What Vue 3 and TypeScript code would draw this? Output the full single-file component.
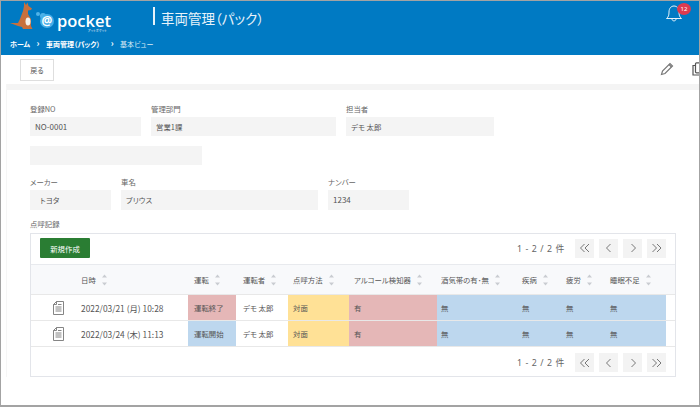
<template>
  <div class="page">
    <header class="app-header">
      <div class="brand-row">
        <div class="logo">
          <svg class="kangaroo" width="26" height="29" viewBox="0 0 26 29">
            <path d="M14 0 L16 3 L17.5 0.5 L18.5 4 L22 6.5 L21 8 L18 8.5 L18 12 L21 17 L21 24 L22.5 27 L13 27 L12 25 L8 24 L0 21 L8 21 L10 17 L13 9 L14 4 Z" fill="#c8703c" />
            <ellipse cx="18" cy="19.5" rx="2.5" ry="4" fill="#f4efe8" />
          </svg>
          <span class="bubble bubble-sm"></span>
          <span class="bubble bubble-md"></span>
          <span class="at">@</span>
          <span class="wordmark">pocket<small>アットポケット</small></span>
        </div>
        <h1 class="app-title">車両管理（パック）</h1>
        <button class="bell" aria-label="通知">
          <svg width="18" height="20" viewBox="0 0 18 20" fill="none" stroke="#e8f3fa" stroke-width="1">
            <path d="M1.5 15.5 C3.5 14 4 12 4 9 C4 5.5 6 3 9 3 C12 3 14 5.5 14 9 C14 12 14.5 14 16.5 15.5 Z" />
            <path d="M7 16 C7 18.5 11 18.5 11 16" />
          </svg>
          <span class="badge">12</span>
        </button>
      </div>
      <nav class="crumbs">
        <a>ホーム</a>
        <i>›</i>
        <a>車両管理（パック）</a>
        <i class="wide">›</i>
        <span>基本ビュー</span>
      </nav>
    </header>

    <div class="toolbar">
      <button class="back-btn">戻る</button>
      <div class="tool-icons">
        <svg width="14" height="14" viewBox="0 0 14 14" fill="none" stroke="#777" stroke-width="1.2">
          <path d="M1.5 12.5 L2.5 9 L10 1.5 L12.5 4 L5 11.5 Z" />
          <path d="M9 2.5 L11.5 5" />
        </svg>
        <svg width="14" height="14" viewBox="0 0 14 14" fill="none" stroke="#555" stroke-width="1.2">
          <rect x="3.5" y="0.8" width="8" height="10" rx="1" />
          <path d="M3.5 3.5 H1 V13 H8.5 V11" />
        </svg>
      </div>
    </div>

    <main class="content">
      <div class="sheet">
        <div class="form-row row-a">
          <div v-for="f in rowA" :key="f.label" class="field">
            <label>{{ f.label }}</label>
            <div class="value" :class="{ latin: f.latin }">{{ f.value }}</div>
          </div>
        </div>
        <div class="value blank"></div>
        <div class="form-row row-b">
          <div v-for="f in rowB" :key="f.label" class="field">
            <label>{{ f.label }}</label>
            <div class="value tall" :class="{ inset: f.label === 'メーカー', latin: f.latin }">{{ f.value }}</div>
          </div>
        </div>

        <div class="section-label">点呼記録</div>
        <section class="records">
          <div class="records-bar">
            <button class="new-btn">新規作成</button>
            <div class="pager">
              <span class="count">1 - 2 / 2 件</span>
              <button v-for="p in pagerIcons" :key="p" class="page-btn">
                <svg width="12" height="10" viewBox="0 0 12 10" fill="none" stroke="#777" stroke-width="1"><path :d="p" /></svg>
              </button>
            </div>
          </div>

          <table class="grid">
            <colgroup>
              <col v-for="(w, i) in colWidths" :key="i" :style="{ width: w + 'px' }" />
            </colgroup>
            <thead>
              <tr>
                <th></th>
                <th v-for="h in headers" :key="h">
                  <span class="th-inner">{{ h }}
                    <svg class="sort" width="5" height="12" viewBox="0 0 5 12"><path d="M2.5 0.5 L5 3.5 H0 Z M2.5 11.5 L5 8.5 H0 Z" fill="#c9ccd1" /></svg>
                  </span>
                </th>
                <th></th>
              </tr>
            </thead>
            <tbody>
              <tr v-for="r in rows" :key="r.date">
                <td class="doc-cell">
                  <svg width="11" height="14" viewBox="0 0 11 14" fill="none" stroke="#777" stroke-width="0.9">
                    <path d="M3.5 0.5 H10.5 V13.5 H0.5 V3.5 Z M3.5 0.5 V3.5 H0.5" />
                    <path d="M2.5 6 H8.5 M2.5 8 H8.5 M2.5 10 H8.5 M5 3.5 H8.5" />
                  </svg>
                </td>
                <td class="date">{{ r.date }}</td>
                <td :class="r.status === '運転終了' ? 'red' : 'blue'">{{ r.status }}</td>
                <td>デモ 太郎</td>
                <td class="yellow">対面</td>
                <td class="red">有</td>
                <td class="blue">無</td>
                <td class="blue">無</td>
                <td class="blue">無</td>
                <td class="blue">無</td>
                <td></td>
              </tr>
            </tbody>
          </table>

          <div class="records-bar foot">
            <div class="pager">
              <span class="count">1 - 2 / 2 件</span>
              <button v-for="p in pagerIcons" :key="p" class="page-btn">
                <svg width="12" height="10" viewBox="0 0 12 10" fill="none" stroke="#777" stroke-width="1"><path :d="p" /></svg>
              </button>
            </div>
          </div>
        </section>
      </div>
    </main>
  </div>
</template>

<script setup lang="ts">
const rowA = [
  { label: '登録NO', value: 'NO-0001', latin: true },
  { label: '管理部門', value: '営業1課' },
  { label: '担当者', value: 'デモ 太郎' }
]

const rowB = [
  { label: 'メーカー', value: 'トヨタ' },
  { label: '車名', value: 'プリウス' },
  { label: 'ナンバー', value: '1234', latin: true }
]

const headers = ['日時', '運転', '運転者', '点呼方法', 'アルコール検知器', '酒気帯の有･無', '疾病', '疲労', '睡眠不足']

const colWidths = [46, 111, 48, 52, 61, 88, 81, 44, 44, 60, 9]

const rows = [
  { date: '2022/03/21 (月) 10:28', status: '運転終了' },
  { date: '2022/03/24 (木) 11:13', status: '運転開始' }
]

const pagerIcons = [
  'M5.5 1 L1.5 5 L5.5 9 M10 1 L6 5 L10 9',
  'M7.5 1 L3.5 5 L7.5 9',
  'M4.5 1 L8.5 5 L4.5 9',
  'M1.5 1 L5.5 5 L1.5 9 M6 1 L10 5 L6 9'
]
</script>

<style scoped>
.page {
  width: 700px;
  height: 407px;
  box-sizing: border-box;
  border: 1px solid #a3a3a3;
  border-bottom-width: 2px;
  overflow: hidden;
  background: #fff;
  font-family: "Noto Sans CJK JP", "Noto Sans", sans-serif;
  font-feature-settings: "palt";
  font-size: 7.4px;
  color: #555;
}

.app-header {
  height: 54px;
  background: #007ac3;
  color: #fff;
  box-sizing: border-box;
}

.brand-row {
  position: relative;
  height: 37px;
  display: flex;
}

.logo {
  position: relative;
  width: 152px;
  display: flex;
  align-items: flex-start;
}

.kangaroo {
  margin: 1px 0 0 9px;
  flex: none;
}

.bubble {
  position: absolute;
  border-radius: 50%;
  background: #4fb2e8;
}

.bubble-sm {
  left: 35px;
  top: 11px;
  width: 4px;
  height: 4px;
}

.bubble-md {
  left: 39px;
  top: 12px;
  width: 6px;
  height: 6px;
}

.at {
  position: absolute;
  left: 39px;
  top: 13px;
  width: 14px;
  height: 14px;
  border-radius: 50%;
  background: #45aee8;
  font-family: "Open Sans", sans-serif;
  font-size: 12px;
  font-weight: 700;
  line-height: 13px;
  text-align: center;
}

.wordmark {
  position: absolute;
  left: 56px;
  top: 12px;
  font-family: "Open Sans", sans-serif;
  font-size: 16.5px;
  font-weight: 600;
  line-height: 16px;
}

.wordmark small {
  position: absolute;
  right: 4px;
  top: 16px;
  font-family: "Noto Sans CJK JP", sans-serif;
  font-size: 3px;
  font-weight: 400;
  letter-spacing: 0.2px;
  line-height: 4px;
  white-space: nowrap;
}

.app-title {
  margin: 6px 0 0;
  padding-left: 6px;
  height: 18px;
  border-left: 2px solid #e6f2f9;
  font-size: 13.5px;
  font-weight: 400;
  line-height: 22px;
  color: #e8f3fa;
}

.bell {
  position: absolute;
  left: 664px;
  top: 2px;
  padding: 0;
  border: 0;
  background: none;
}

.badge {
  position: absolute;
  left: 12px;
  top: 0;
  width: 14px;
  height: 12px;
  border-radius: 50%;
  background: #dc3b4f;
  color: #fff;
  font-family: "Noto Sans", sans-serif;
  font-size: 6px;
  line-height: 12px;
  text-align: center;
}

.crumbs {
  display: flex;
  align-items: center;
  padding-left: 9px;
  font-size: 7px;
  font-weight: 700;
  line-height: 12px;
  white-space: nowrap;
}

.crumbs i {
  width: 16px;
  text-align: center;
  font-style: normal;
  font-size: 9px;
  font-weight: 700;
}

.crumbs i.wide {
  width: 20px;
  padding-left: 4px;
  box-sizing: border-box;
}

.crumbs span {
  font-weight: 400;
  color: #dcebf5;
}

.toolbar {
  height: 29px;
  display: flex;
  align-items: center;
  justify-content: space-between;
  padding-left: 19px;
}

.back-btn {
  width: 34px;
  height: 22px;
  margin-top: 1px;
  padding: 0;
  border: 1px solid #dedede;
  background: #fff;
  font-family: inherit;
  font-feature-settings: inherit;
  font-size: 7px;
  color: #555;
}

.tool-icons {
  display: flex;
  gap: 18px;
  margin-right: -7px;
  margin-top: -1px;
}

.content {
  padding-left: 5px;
}

.sheet {
  border-top: 6px solid #f4f4f4;
  border-left: 1px solid #f6f6f6;
  padding: 12px 0 0 23px;
}

.form-row {
  display: grid;
  column-gap: 10px;
}

.row-a {
  grid-template-columns: 111px 185px 148px;
}

.row-b {
  grid-template-columns: 81px 197px 81px;
  margin-top: 10px;
}

.field label {
  display: block;
  height: 15px;
  line-height: 13px;
  color: #666;
}

.value {
  height: 19px;
  padding-left: 5px;
  background: #f4f4f4;
  line-height: 19px;
  color: #555;
  box-sizing: border-box;
}

.value.latin {
  font-size: 8px;
}

.value.tall {
  height: 20px;
  line-height: 20px;
}

.value.inset {
  padding-left: 10px;
}

.value.blank {
  width: 172px;
  margin-top: 10px;
}

.section-label {
  margin-top: 8px;
  height: 15px;
  line-height: 12px;
  color: #666;
}

.records {
  width: 646px;
  height: 144px;
  box-sizing: border-box;
  border: 1px solid #e3e5ea;
}

.records-bar {
  height: 30px;
  display: flex;
  align-items: center;
  justify-content: space-between;
  padding: 0 9px 2px 9px;
  box-sizing: border-box;
}

.records-bar.foot {
  justify-content: flex-end;
  padding: 1px 9px 0 9px;
}

.new-btn {
  width: 50px;
  height: 20px;
  padding: 0;
  border: 0;
  border-radius: 1px;
  background: #2a7d33;
  color: #fff;
  font-family: inherit;
  font-feature-settings: inherit;
  font-size: 7.4px;
}

.pager {
  display: flex;
  align-items: center;
  gap: 5px;
}

.count {
  margin-right: 5px;
  font-family: "Noto Sans", "Noto Sans CJK JP", sans-serif;
  font-size: 8.8px;
  letter-spacing: 0.6px;
  color: #666;
}

.page-btn {
  width: 19px;
  height: 19px;
  padding: 0;
  border: 0;
  background: #f3f3f3;
  display: flex;
  align-items: center;
  justify-content: center;
}

.grid {
  width: 644px;
  table-layout: fixed;
  border-collapse: collapse;
  color: #555;
}

.grid th {
  height: 30px;
  padding: 0 0 0 4px;
  background: #f8f9fb;
  border-top: 1px solid #e8eaee;
  font-weight: 400;
  text-align: left;
  white-space: nowrap;
  box-sizing: border-box;
}

.th-inner {
  display: inline-flex;
  align-items: center;
  gap: 6px;
}

.grid td {
  height: 26px;
  padding: 0 0 0 4px;
  border-top: 1px solid #e8e8e8;
  border-bottom: 1px solid #e8e8e8;
  white-space: nowrap;
  box-sizing: border-box;
}

/* 列ごとに文字の開始位置が少し違う */
.grid tr > :nth-child(3) {
  padding-left: 6px;
}

.grid tr > :nth-child(4) {
  padding-left: 7px;
}

.grid tr > :nth-child(5),
.grid tr > :nth-child(6) {
  padding-left: 5px;
}

.grid td.date {
  font-size: 8.4px;
}

.grid td.doc-cell {
  padding: 0 0 0 22px;
}

.doc-cell svg {
  display: block;
}

.grid td.red {
  background: #e5b7b7;
}

.grid td.blue {
  background: #bdd7ee;
}

.grid td.yellow {
  background: #ffe196;
}
</style>

<style>
html,
body {
  margin: 0;
  background: #fff;
}
</style>
